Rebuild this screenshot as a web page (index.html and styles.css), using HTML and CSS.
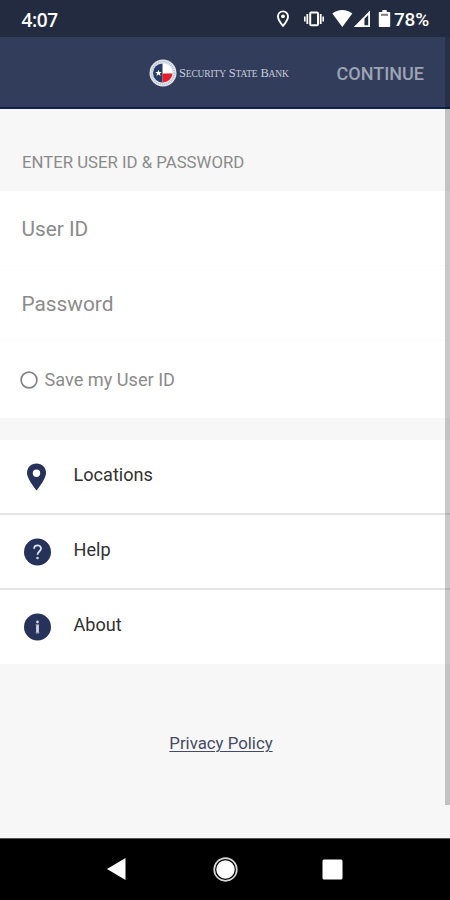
FILE: index.html
```html
<!DOCTYPE html>
<html lang="en">
<head>
<meta charset="utf-8">
<title>Security State Bank</title>
<link rel="stylesheet" href="styles.css">
</head>
<body>
<div class="screen">
  <div class="status">
    <span class="time">4:07</span>
    <svg class="status-icons" width="120" height="37" viewBox="272 0 120 37">
      <path d="M283 11.400c-3 0-5 2.200-5 5 0 3.500 5 9.400 5 9.400s5-5.900 5-9.400c0-2.800-2-5-5-5z" fill="none" stroke="#fff" stroke-width="1.900"/>
      <circle cx="283" cy="16.300" r="1.900" fill="#fff"/>
      <rect x="310.200" y="12.600" width="7.800" height="12.600" rx="1" fill="none" stroke="#fff" stroke-width="2"/>
      <path d="M307.300 14v10M320.700 14v10" stroke="#fff" stroke-width="1.800"/>
      <path d="M304.800 16.500v5M323.200 16.500v5" stroke="#fff" stroke-width="1.600"/>
      <path d="M332.300 13.600c5.500-4.800 14.500-4.800 20 0L342.300 27z" fill="#fff"/>
      <path d="M370 10.500V27H353.800z" fill="#fff"/>
      <path d="M368.200 15v10.300h-3.700v-6.500z" fill="#232b40"/>
      <path d="M379.500 12h2.800v-2h4.400v2h2.800q.7 0 .7.800v13.400q0 .8-.8.800h-9.800q-.8 0-.8-.8V12.800q0-.8.700-.8z" fill="#fff"/>
      <path d="M381 14.800h7" stroke="#777d88" stroke-width="2"/>
    </svg>
    <span class="percent">78%</span>
  </div>
  <header class="header">
    <div class="brand">
      <svg width="28" height="28" viewBox="0 0 28 28">
        <circle cx="14" cy="14" r="13.500" fill="#e1e6ec"/>
        <circle cx="14" cy="14" r="11.400" fill="none" stroke="#b4bdc7" stroke-width="1.800" stroke-dasharray="1 1"/>
        <circle cx="14" cy="14" r="9.500" fill="#fff"/>
        <path d="M13.500 4.500a9.500 9.500 0 0 0 0 19z" fill="#263b65"/>
        <path d="M13.500 14.500h10a9.500 9.500 0 0 1-10 9z" fill="#e21f2c"/>
        <path d="M9.500 10.700l.9 2.300h2.400l-1.900 1.500.7 2.400-2.100-1.400-2.100 1.400.7-2.400-1.900-1.500h2.400z" fill="#fff"/>
      </svg>
      <span class="brand-name">S<small>ECURITY</small> S<small>TATE</small> B<small>ANK</small></span>
    </div>
    <span class="continue">CONTINUE</span>
  </header>
  <main class="content">
    <h1 class="section-title"><span>ENTER USER ID &amp; PASSWORD</span></h1>
    <div class="field"><span class="user">User ID</span></div>
    <div class="field"><span class="password">Password</span></div>
    <div class="save">
      <svg width="18" height="18" viewBox="0 0 18 18"><circle cx="9" cy="9" r="7.900" fill="none" stroke="#828282" stroke-width="1.700"/></svg>
      <span>Save my User ID</span>
    </div>
    <nav class="menu">
      <div class="item">
        <svg width="28" height="28" viewBox="0 0 28 28"><path d="M13.500.5C8 .5 4 4.600 4 9.800c0 6.500 9.500 17.700 9.500 17.700S23 16.300 23 9.800C23 4.600 19 .5 13.500.5z" fill="#26325a"/><circle cx="13.500" cy="10.200" r="3.700" fill="#fff"/></svg>
        <span class="locations">Locations</span>
      </div>
      <div class="item">
        <svg width="28" height="28" viewBox="0 0 28 28"><circle cx="14.500" cy="14" r="13.500" fill="#26325a"/><path d="M11.100 10.800c0-4.600 6.900-4.500 6.900-.2 0 2.900-3.500 3-3.500 6.100" fill="none" stroke="#dce2ec" stroke-width="1.800"/><circle cx="14.500" cy="20" r="1.300" fill="#cbd3df"/></svg>
        <span class="help">Help</span>
      </div>
      <div class="item">
        <svg width="28" height="28" viewBox="0 0 28 28"><circle cx="14.500" cy="14" r="13.500" fill="#26325a"/><path d="M14.500 11.500v8.800" stroke="#cbd3df" stroke-width="2.800"/><path d="M12.600 12h2M12.600 19.700h3.800" fill="none" stroke="#8f9ab3" stroke-width="1"/><circle cx="14.500" cy="9" r="1.400" fill="#cbd3df"/></svg>
        <span class="about">About</span>
      </div>
    </nav>
    <footer class="footer"><a class="privacy">Privacy Policy</a></footer>
  </main>
  <div class="scrollbar"></div>
  <div class="system-nav">
    <svg width="450" height="62" viewBox="0 0 450 62">
      <path d="M107 31l18.500-11v22z" fill="#fff"/>
      <circle cx="225.500" cy="31.500" r="11.300" fill="none" stroke="#d8d8d8" stroke-width="1.700"/>
      <circle cx="225.500" cy="31.500" r="9.200" fill="#fff"/>
      <rect x="322.500" y="21.500" width="20" height="20" rx="1.500" fill="#fff"/>
    </svg>
  </div>
</div>
</body>
</html>
```
FILE: styles.css
```css
* { box-sizing: border-box; }
body { margin: 0; font-family: Roboto, "Liberation Sans", sans-serif; }
.screen { position: relative; width: 450px; height: 900px; overflow: hidden; display: flex; flex-direction: column; background: #f7f7f7; }
.status { height: 37px; flex: none; display: flex; align-items: center; padding: 2px 20px 0 21.5px; background: #232b40; color: #fff; }
.time { font: 600 19px/24px "Open Sans", sans-serif; letter-spacing: -.4px; }
.status-icons { margin: -2px 2px 0 auto; }
.percent { width: 36px; font-size: 19px; font-weight: 500; letter-spacing: -.2px; white-space: nowrap; }
.header { height: 72px; flex: none; display: flex; align-items: center; justify-content: space-between; padding: 2px 26px 0 149px; background: #323d5c; border-bottom: 2px solid #10214f; }
.brand { display: flex; align-items: center; gap: 2px; }
.brand-name { color: #c6ccd8; font: 12.500px/18px "Liberation Serif", serif; letter-spacing: -.16px; white-space: nowrap; }
.brand-name small { font-size: 9.500px; }
.continue { color: #9da4b3; font-size: 18px; font-weight: 500; margin-top: 1px; }
.content { height: 729px; display: flex; flex-direction: column; }
.section-title { height: 82px; flex: none; margin: 0; padding: 24px 22px 0; display: flex; align-items: center; font-size: 16.750px; font-weight: 400; color: #8b8b8b; }
.field { height: 75px; flex: none; padding: 2px 21.500px 0; display: flex; align-items: center; background: #fff; border-bottom: 1px solid #fcfcfc; color: #8b8b8b; font-size: 20.800px; }
.password { margin-top: -1px; }
.save { height: 77px; flex: none; padding: 0 20px 0; display: flex; align-items: center; gap: 6.500px; background: #fff; color: #8b8b8b; font-size: 18.150px; }
.menu { margin-top: 22px; flex: none; background: #fff; }
.item { height: 75px; padding: 0 23px; display: flex; align-items: center; gap: 22.500px; border-bottom: 2px solid #e4e4e4; color: #303030; font-size: 18.100px; }
.item svg { margin-top: 0; }
.item span { margin-top: -5px; }
.item:last-child { height: 74px; border-bottom: 0; }
.item:last-child svg { margin-top: -1px; }
.footer { padding-top: 69px; text-align: center; }
.privacy { display: inline-block; margin-right: 8px; color: #444b66; font-size: 16.800px; line-height: 20px; text-decoration: underline; text-decoration-thickness: 1px; text-underline-offset: 2px; }
.scrollbar { position: absolute; right: 0; top: 37px; width: 5px; height: 768px; background: rgba(0,0,0,.21); }
.system-nav { height: 62px; flex: none; background: #000; border-top: 1px solid #555; }
.system-nav svg { display: block; margin-top: -1px; }
```
